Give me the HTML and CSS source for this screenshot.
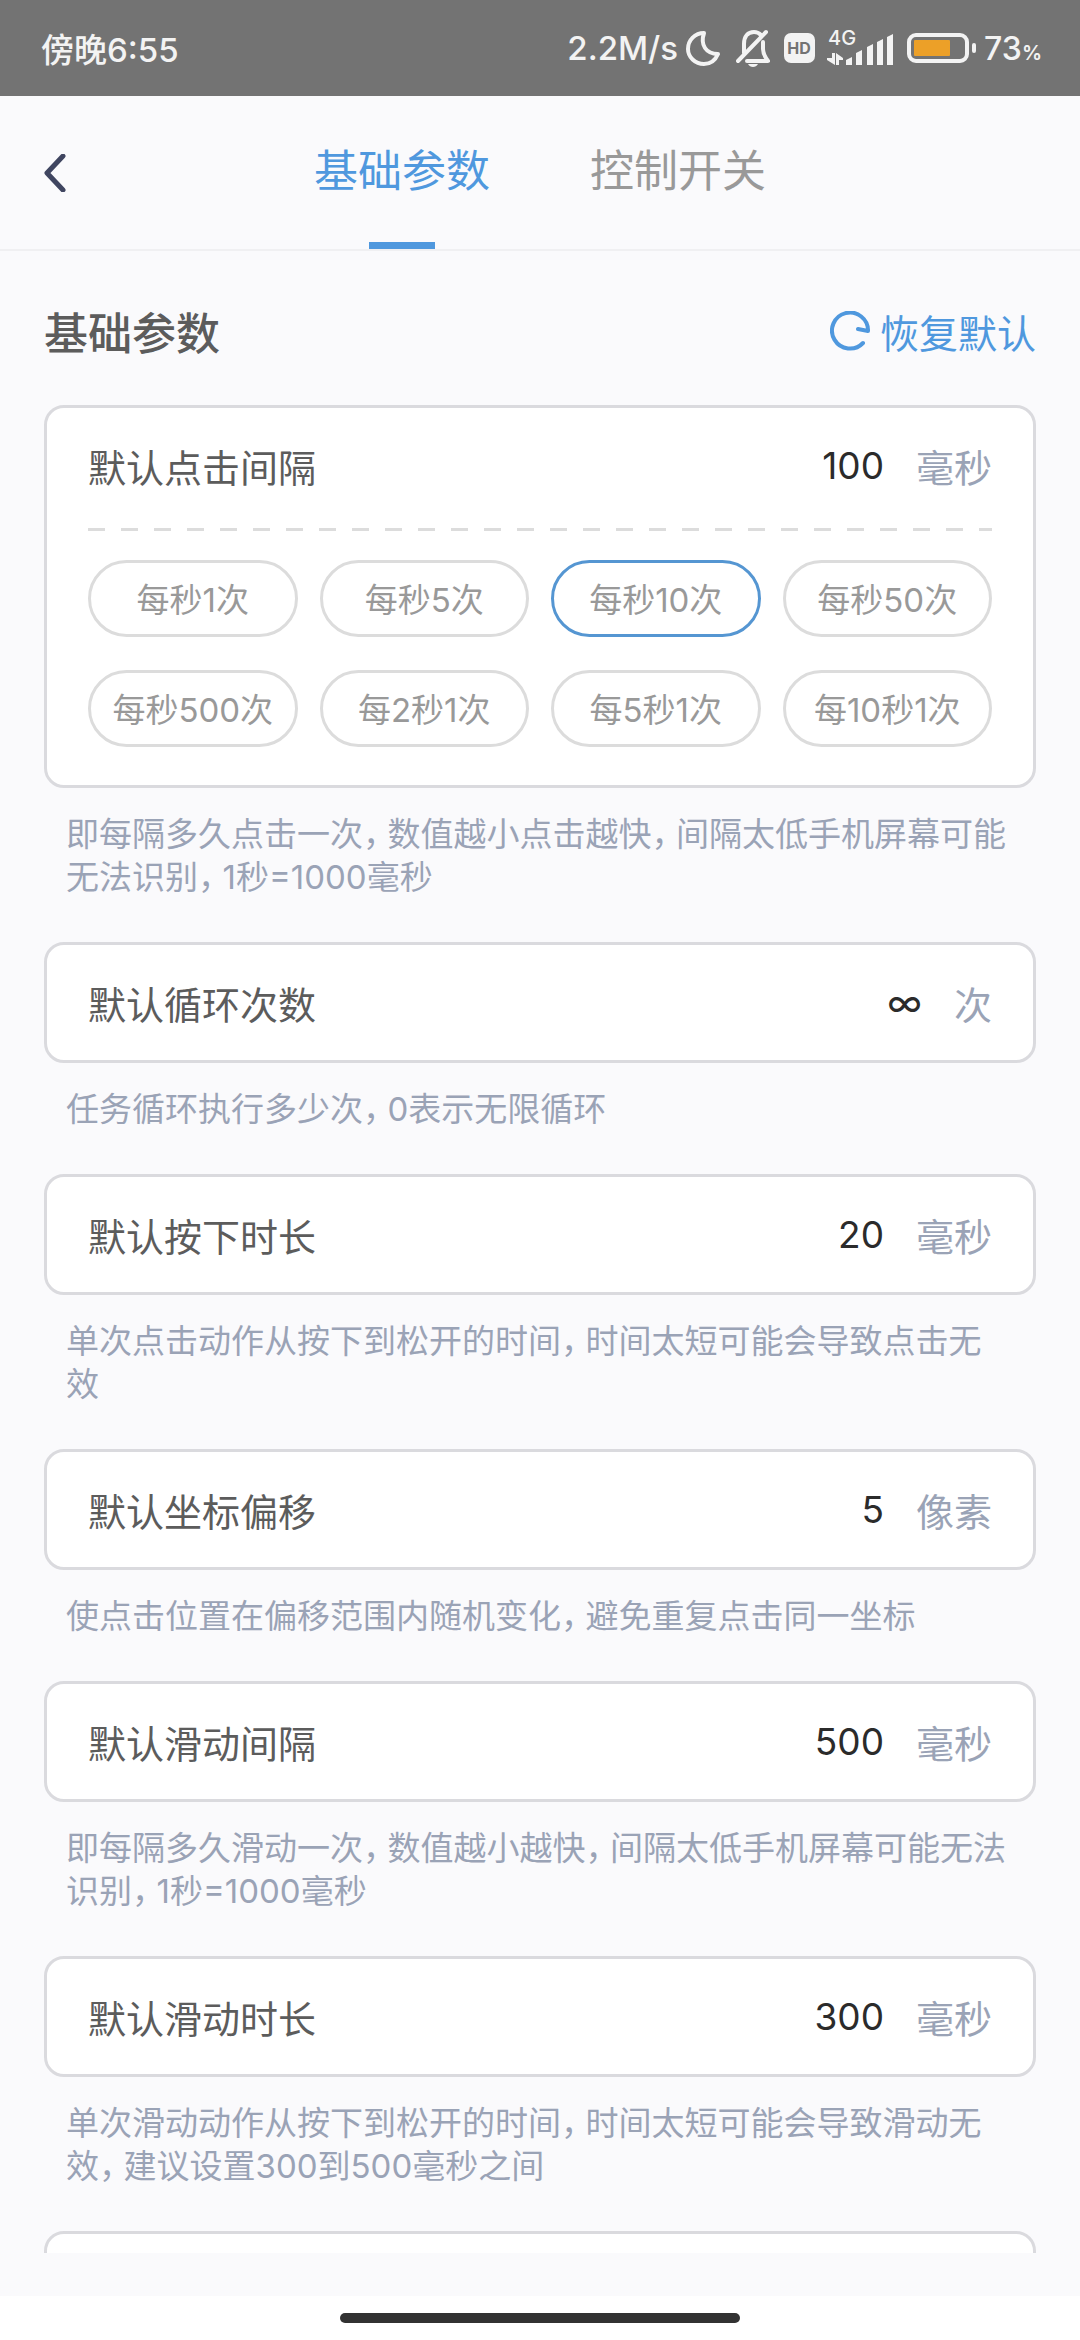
FILE: index.html
```html
<!DOCTYPE html>
<html lang="zh-CN">
<head>
<meta charset="utf-8">
<meta name="viewport" content="width=device-width, initial-scale=1">
<title>基础参数</title>
<link rel="stylesheet" href="styles.css">
</head>
<body>
<div class="status">
  <span>傍晚6:55</span>
  <div class="status-icons">
    <span>2.2M/s</span>
    <svg class="moon" width="34" height="36" viewBox="0 0 34 36" fill="none" stroke="currentColor" stroke-width="4" stroke-linejoin="round"><path d="M18 3C14 15 20 24 32 24C29 31 24 34 18 34C9 34 2 27 2 19C2 10 9 3 18 3Z"/></svg>
    <svg class="bell" width="34" height="38" viewBox="0 0 34 38" fill="none" stroke="currentColor" stroke-width="4" stroke-linecap="round" stroke-linejoin="round"><path d="M2 32L30 3M8 24V15C8 7 12 3 18 3C21 3 23 4 25 6M27 13V20C27 25 29 28 32 32H11"/><path d="M12 35H22C20 39 14 39 12 35Z" fill="currentColor" stroke="none"/></svg>
    <svg class="hd" width="31" height="30" viewBox="0 0 31 30"><rect width="31" height="30" rx="7" fill="currentColor"/><text x="15" y="21" text-anchor="middle" class="hd-text">HD</text></svg>
    <svg class="signal" width="67" height="46" viewBox="0 -4 67 46" fill="currentColor"><text x="2" y="16" class="net-text">4G</text><path d="M6 24H9V36L1 31V29H6ZM10 36V24L17 29V31H13V36ZM20 36V31L26 28V36ZM30 36V24L36 21V36ZM41 36V18L47 15V36ZM51 36V13L57 10V36ZM61 36V8L67 5V36Z"/></svg>
    <svg class="battery" width="69" height="30" viewBox="0 0 69 30"><rect x="2" y="2" width="58" height="26" rx="7" fill="none" stroke="currentColor" stroke-width="4"/><rect x="7" y="7" width="36" height="16" rx="1" fill="#eca028"/><rect x="65" y="10" width="4" height="10" rx="2" fill="currentColor"/></svg>
    <span class="charge">73<small class="percent">%</small></span>
  </div>
</div>

<header class="header">
  <button class="back" type="button" aria-label="返回"><svg width="22" height="38" viewBox="0 0 22 38" fill="none" stroke="currentColor" stroke-width="5" stroke-linecap="round" stroke-linejoin="round"><path d="M19 2L3 19L19 36"/></svg></button>
  <nav class="tabs">
    <button class="tab tab-active" type="button">基础参数</button>
    <button class="tab" type="button">控制开关</button>
  </nav>
</header>

<main class="content">
  <div class="heading">
    <h1 class="title">基础参数</h1>
    <button class="reset" type="button"><svg width="40" height="40" viewBox="0 0 40 40" fill="none" stroke="currentColor" stroke-width="4" stroke-linecap="round" stroke-linejoin="round"><path d="M33 32A18 18 0 1 1 38 20L28 18"/></svg>恢复默认</button>
  </div>

  <section class="card">
    <div class="row"><label class="label" for="click-gap">默认点击间隔</label><input class="value" id="click-gap" value="100"><span class="unit">毫秒</span></div>
    <div class="divider"></div>
    <div class="chips">
      <button class="chip" type="button">每秒1次</button>
      <button class="chip" type="button">每秒5次</button>
      <button class="chip chip-active" type="button">每秒10次</button>
      <button class="chip" type="button">每秒50次</button>
      <button class="chip" type="button">每秒500次</button>
      <button class="chip" type="button">每2秒1次</button>
      <button class="chip" type="button">每5秒1次</button>
      <button class="chip" type="button">每10秒1次</button>
    </div>
  </section>
  <p class="hint">即每隔多久点击一次<span class="comma">，</span>数值越小点击越快<span class="comma">，</span>间隔太低手机屏幕可能无法识别<span class="comma">，</span>1秒=1000毫秒</p>

  <section class="card">
    <div class="row"><label class="label" for="loops">默认循环次数</label><input class="value" id="loops" value="∞"><span class="unit">次</span></div>
  </section>
  <p class="hint">任务循环执行多少次<span class="comma">，</span>0表示无限循环</p>

  <section class="card">
    <div class="row"><label class="label" for="press-time">默认按下时长</label><input class="value" id="press-time" value="20"><span class="unit">毫秒</span></div>
  </section>
  <p class="hint">单次点击动作从按下到松开的时间<span class="comma">，</span>时间太短可能会导致点击无效</p>

  <section class="card">
    <div class="row"><label class="label" for="offset">默认坐标偏移</label><input class="value" id="offset" value="5"><span class="unit">像素</span></div>
  </section>
  <p class="hint">使点击位置在偏移范围内随机变化<span class="comma">，</span>避免重复点击同一坐标</p>

  <section class="card">
    <div class="row"><label class="label" for="swipe-gap">默认滑动间隔</label><input class="value" id="swipe-gap" value="500"><span class="unit">毫秒</span></div>
  </section>
  <p class="hint">即每隔多久滑动一次<span class="comma">，</span>数值越小越快<span class="comma">，</span>间隔太低手机屏幕可能无法识别<span class="comma">，</span>1秒=1000毫秒</p>

  <section class="card">
    <div class="row"><label class="label" for="swipe-time">默认滑动时长</label><input class="value" id="swipe-time" value="300"><span class="unit">毫秒</span></div>
  </section>
  <p class="hint">单次滑动动作从按下到松开的时间<span class="comma">，</span>时间太短可能会导致滑动无效<span class="comma">，</span>建议设置300到500毫秒之间</p>

  <section class="card"><div class="row"></div></section>
</main>

<footer class="gesture"><div class="pill"></div></footer>
</body>
</html>
```

FILE: styles.css
```css
* {
  box-sizing: border-box;
}

body {
  margin: 0;
  height: 100vh;
  display: flex;
  flex-direction: column;
  background: #fafafc;
  color: #5c5c5c;
  font-family: Inter, "Noto Sans CJK SC", sans-serif;
}

button,
input {
  margin: 0;
  padding: 0;
  border: 0;
  background: none;
  color: inherit;
  font: inherit;
}

svg {
  display: block;
  flex: none;
}

/* Status bar */
.status {
  flex: none;
  height: 96px;
  padding: 0 38px 0 41px;
  display: flex;
  align-items: center;
  justify-content: space-between;
  background: #737373;
  color: #f3f3f3;
  font-size: 33px;
  font-weight: 500;
  white-space: nowrap;
}

.status-icons {
  display: flex;
  align-items: center;
}

.moon { margin-left: 8px; }
.bell { margin-left: 16px; }
.hd { margin-left: 14px; }
.signal { margin-left: 11px; }
.battery { margin: 0 8px 0 14px; }

.hd-text {
  fill: #737373;
  font-size: 16px;
  font-weight: 700;
}

.net-text {
  font-size: 20px;
}

.charge {
  font-size: 32px;
}

.percent {
  font-size: 20px;
  font-weight: 600;
}

/* Header with tabs */
.header {
  flex: none;
  height: 155px;
  display: grid;
  grid-template-columns: 1fr auto 1fr;
  border-bottom: 2px solid #f0f0f2;
}

.back {
  justify-self: start;
  padding: 0 44px;
  color: #3f4560;
}

.tabs {
  display: flex;
  gap: 100px;
}

.tab {
  position: relative;
  padding-bottom: 10px;
  font-size: 44px;
  color: #999;
}

.tab-active {
  color: #4f98de;
}

.tab-active::after {
  content: "";
  position: absolute;
  left: 50%;
  bottom: 0;
  width: 66px;
  height: 7px;
  margin-left: -33px;
  background: #4f98de;
}

.content {
  flex: 1;
  min-height: 0;
  overflow: hidden;
  margin-bottom: 43px;
  padding: 0 44px;
}

.heading {
  height: 154px;
  padding-top: 6px;
  display: flex;
  align-items: center;
  justify-content: space-between;
}

.title {
  margin: 0;
  font-size: 44px;
  font-weight: 500;
}

.reset {
  display: flex;
  align-items: center;
  gap: 10px;
  color: #4f98de;
  font-size: 39px;
}

.card {
  padding: 0 41px;
  border: 3px solid #dadade;
  border-radius: 20px;
  background: #fff;
}

.row {
  height: 115px;
  display: flex;
  align-items: center;
  font-size: 38px;
}

.value {
  flex: 1;
  min-width: 0;
  margin-right: 32px;
  text-align: right;
  color: #2b2b2b;
  font-size: 37px;
}

.unit {
  color: #9aa3b6;
}

.divider {
  height: 3px;
  margin: 5px 0 29px;
  background: repeating-linear-gradient(90deg, #dcdcdc 0 17px, transparent 17px 33px);
}

.chips {
  display: grid;
  grid-template-columns: repeat(4, 1fr);
  gap: 33px 22px;
  padding-bottom: 38px;
}

.chip {
  height: 77px;
  padding-bottom: 2px;
  border: 3px solid #dcdcdc;
  border-radius: 39px;
  color: #999;
  font-size: 33px;
  white-space: nowrap;
}

.chip-active {
  border-color: #5596d2;
}

.hint {
  margin: 25px 0 43px;
  padding: 0 22px;
  color: #9aa3b6;
  font-size: 33px;
  line-height: 43px;
}

/* Half-width comma with its own spacing */
.comma {
  margin-right: 8px;
  font-feature-settings: "halt";
}

/* Gesture bar */
.gesture {
  flex: none;
  height: 44px;
  display: flex;
  align-items: center;
  justify-content: center;
  background: #fff;
}

.pill {
  width: 37%;
  height: 10px;
  border-radius: 5px;
  background: #323232;
}
```
